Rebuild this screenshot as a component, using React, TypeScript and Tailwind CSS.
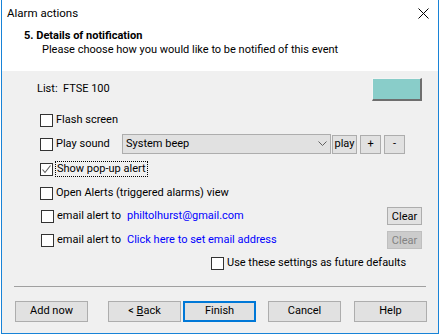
import { ReactNode } from "react";

const FONT = { fontFamily: 'Roboto, "Liberation Sans", sans-serif' };

const Box = ({ checked }: { checked?: boolean }) => (
  <div className="w-[13px] h-[13px] shrink-0 border border-[#333333] bg-white flex items-center justify-center">
    {checked && (
      <svg width="11" height="11" viewBox="0 0 11 11">
        <polyline points="1.5,5.5 4,8.5 9.5,1.5" fill="none" stroke="#5a5a5a" strokeWidth="1.1" />
      </svg>
    )}
  </div>
);

const SmallBtn = ({ children, w, disabled }: { children: ReactNode; w: string; disabled?: boolean }) => (
  <div
    className={`${w} h-[18px] flex items-center justify-center border text-[11px] leading-none ${
      disabled ? "bg-[#cccccc] border-[#bfbfbf] text-[#838383]" : "bg-[#e1e1e1] border-[#adadad] text-black"
    }`}
  >
    {children}
  </div>
);

const FooterBtn = ({ children, primary }: { children: ReactNode; primary?: boolean }) => (
  <div
    className={`w-[73px] h-[21px] flex items-center justify-center bg-[#e1e1e1] text-[11px] ${
      primary ? "border-2 border-[#0078d7]" : "border border-[#adadad]"
    }`}
  >
    {children}
  </div>
);

export default function App() {
  return (
    <div className="w-[441px] h-[336px] bg-white overflow-hidden text-black whitespace-nowrap" style={FONT}>
      <div className="ml-[1px] w-[438px] h-[334px] border-x border-b border-[#1883d7] flex flex-col">
        <div className="h-[27px] shrink-0 flex items-center justify-between pl-[5px] pr-[9px] bg-white">
          <span className="text-[11.5px]">Alarm actions</span>
          <svg width="11" height="11" viewBox="0 0 11 11">
            <path d="M0.5 0.5 L10.5 10.5 M10.5 0.5 L0.5 10.5" stroke="#000" strokeWidth="1" />
          </svg>
        </div>
        <div className="h-[44px] shrink-0 bg-white pt-[2px]">
          <div className="pl-[22px] text-[11px] font-bold leading-[14px]">5. Details of notification</div>
          <div className="pl-[40px] text-[11px] leading-[14px]">Please choose how you would like to be notified of this event</div>
        </div>

        <div className="flex-1 bg-[#f0f0f0] flex flex-col text-[11px]">
          <div className="mt-[7px] h-[23px] flex items-center justify-between pl-[35px] pr-[16px]">
            <span>List:&nbsp; FTSE 100</span>
            <div className="w-[50px] h-[23px] bg-[#89cdc9] border-t border-l border-t-[#f4f4f4] border-l-[#f4f4f4] border-b-2 border-r-2 border-b-[#6e6e6e] border-r-[#6e6e6e]" />
          </div>

          <div className="mt-[9px] h-[20px] flex items-center gap-[3px] pl-[38px]">
            <Box />
            <span>Flash screen</span>
          </div>

          <div className="mt-[4px] h-[20px] flex items-center pl-[38px]">
            <Box />
            <span className="ml-[3px] w-[66px] shrink-0">Play sound</span>
            <div className="w-[209px] h-[20px] bg-[#e1e1e1] border border-[#adadad] flex items-center justify-between pl-[3px] pr-[3px]">
              <span>System beep</span>
              <svg width="9" height="6" viewBox="0 0 9 6">
                <polyline points="0.5,0.5 4.5,4.5 8.5,0.5" fill="none" stroke="#606060" strokeWidth="1" />
              </svg>
            </div>
            <div className="ml-[1px] w-[25px] h-[19px] bg-[#e1e1e1] border border-[#adadad] flex items-center justify-center">play</div>
            <div className="ml-[3px] w-[21px] h-[19px] bg-[#e1e1e1] border border-[#adadad] flex items-center justify-center">+</div>
            <div className="ml-[3px] w-[21px] h-[19px] bg-[#e1e1e1] border border-[#adadad] flex items-center justify-center">-</div>
          </div>

          <div className="mt-[5px] h-[20px] flex items-center gap-[2px] pl-[38px]">
            <Box checked />
            <span className="border border-dotted border-black px-[1px] leading-[14px]">Show pop-up alert</span>
          </div>

          <div className="mt-[4px] h-[20px] flex items-center gap-[3px] pl-[38px]">
            <Box />
            <span>Open Alerts (triggered alarms) view</span>
          </div>

          <div className="mt-[4px] h-[18px] flex items-center pl-[39px] pr-[16px]">
            <Box />
            <span className="ml-[3px] w-[70px] shrink-0">email alert to</span>
            <span className="text-[#0000ff]">philtolhurst@gmail.com</span>
            <div className="ml-auto">
              <SmallBtn w="w-[35px]">Clear</SmallBtn>
            </div>
          </div>

          <div className="mt-[6px] h-[18px] flex items-center pl-[39px] pr-[16px]">
            <Box />
            <span className="ml-[3px] w-[70px] shrink-0">email alert to</span>
            <span className="text-[#0000ff]">Click here to set email address</span>
            <div className="ml-auto">
              <SmallBtn w="w-[35px]" disabled>Clear</SmallBtn>
            </div>
          </div>

          <div className="mt-[5px] h-[19px] flex items-center gap-[3px] pl-[209px]">
            <Box />
            <span>Use these settings as future defaults</span>
          </div>

          <div className="mt-[13px] mx-[12px] h-px bg-[#a0a0a0]" />

          <div className="mt-[14px] flex items-center pl-[13px]">
            <FooterBtn>Add now</FooterBtn>
            <div className="ml-[20px]">
              <FooterBtn>
                <span>&lt; <span className="underline">B</span>ack</span>
              </FooterBtn>
            </div>
            <div className="ml-[2px]">
              <FooterBtn primary>Finish</FooterBtn>
            </div>
            <div className="ml-[12px]">
              <FooterBtn>Cancel</FooterBtn>
            </div>
            <div className="ml-[13px]">
              <FooterBtn>Help</FooterBtn>
            </div>
          </div>
        </div>
      </div>
    </div>
  );
}
